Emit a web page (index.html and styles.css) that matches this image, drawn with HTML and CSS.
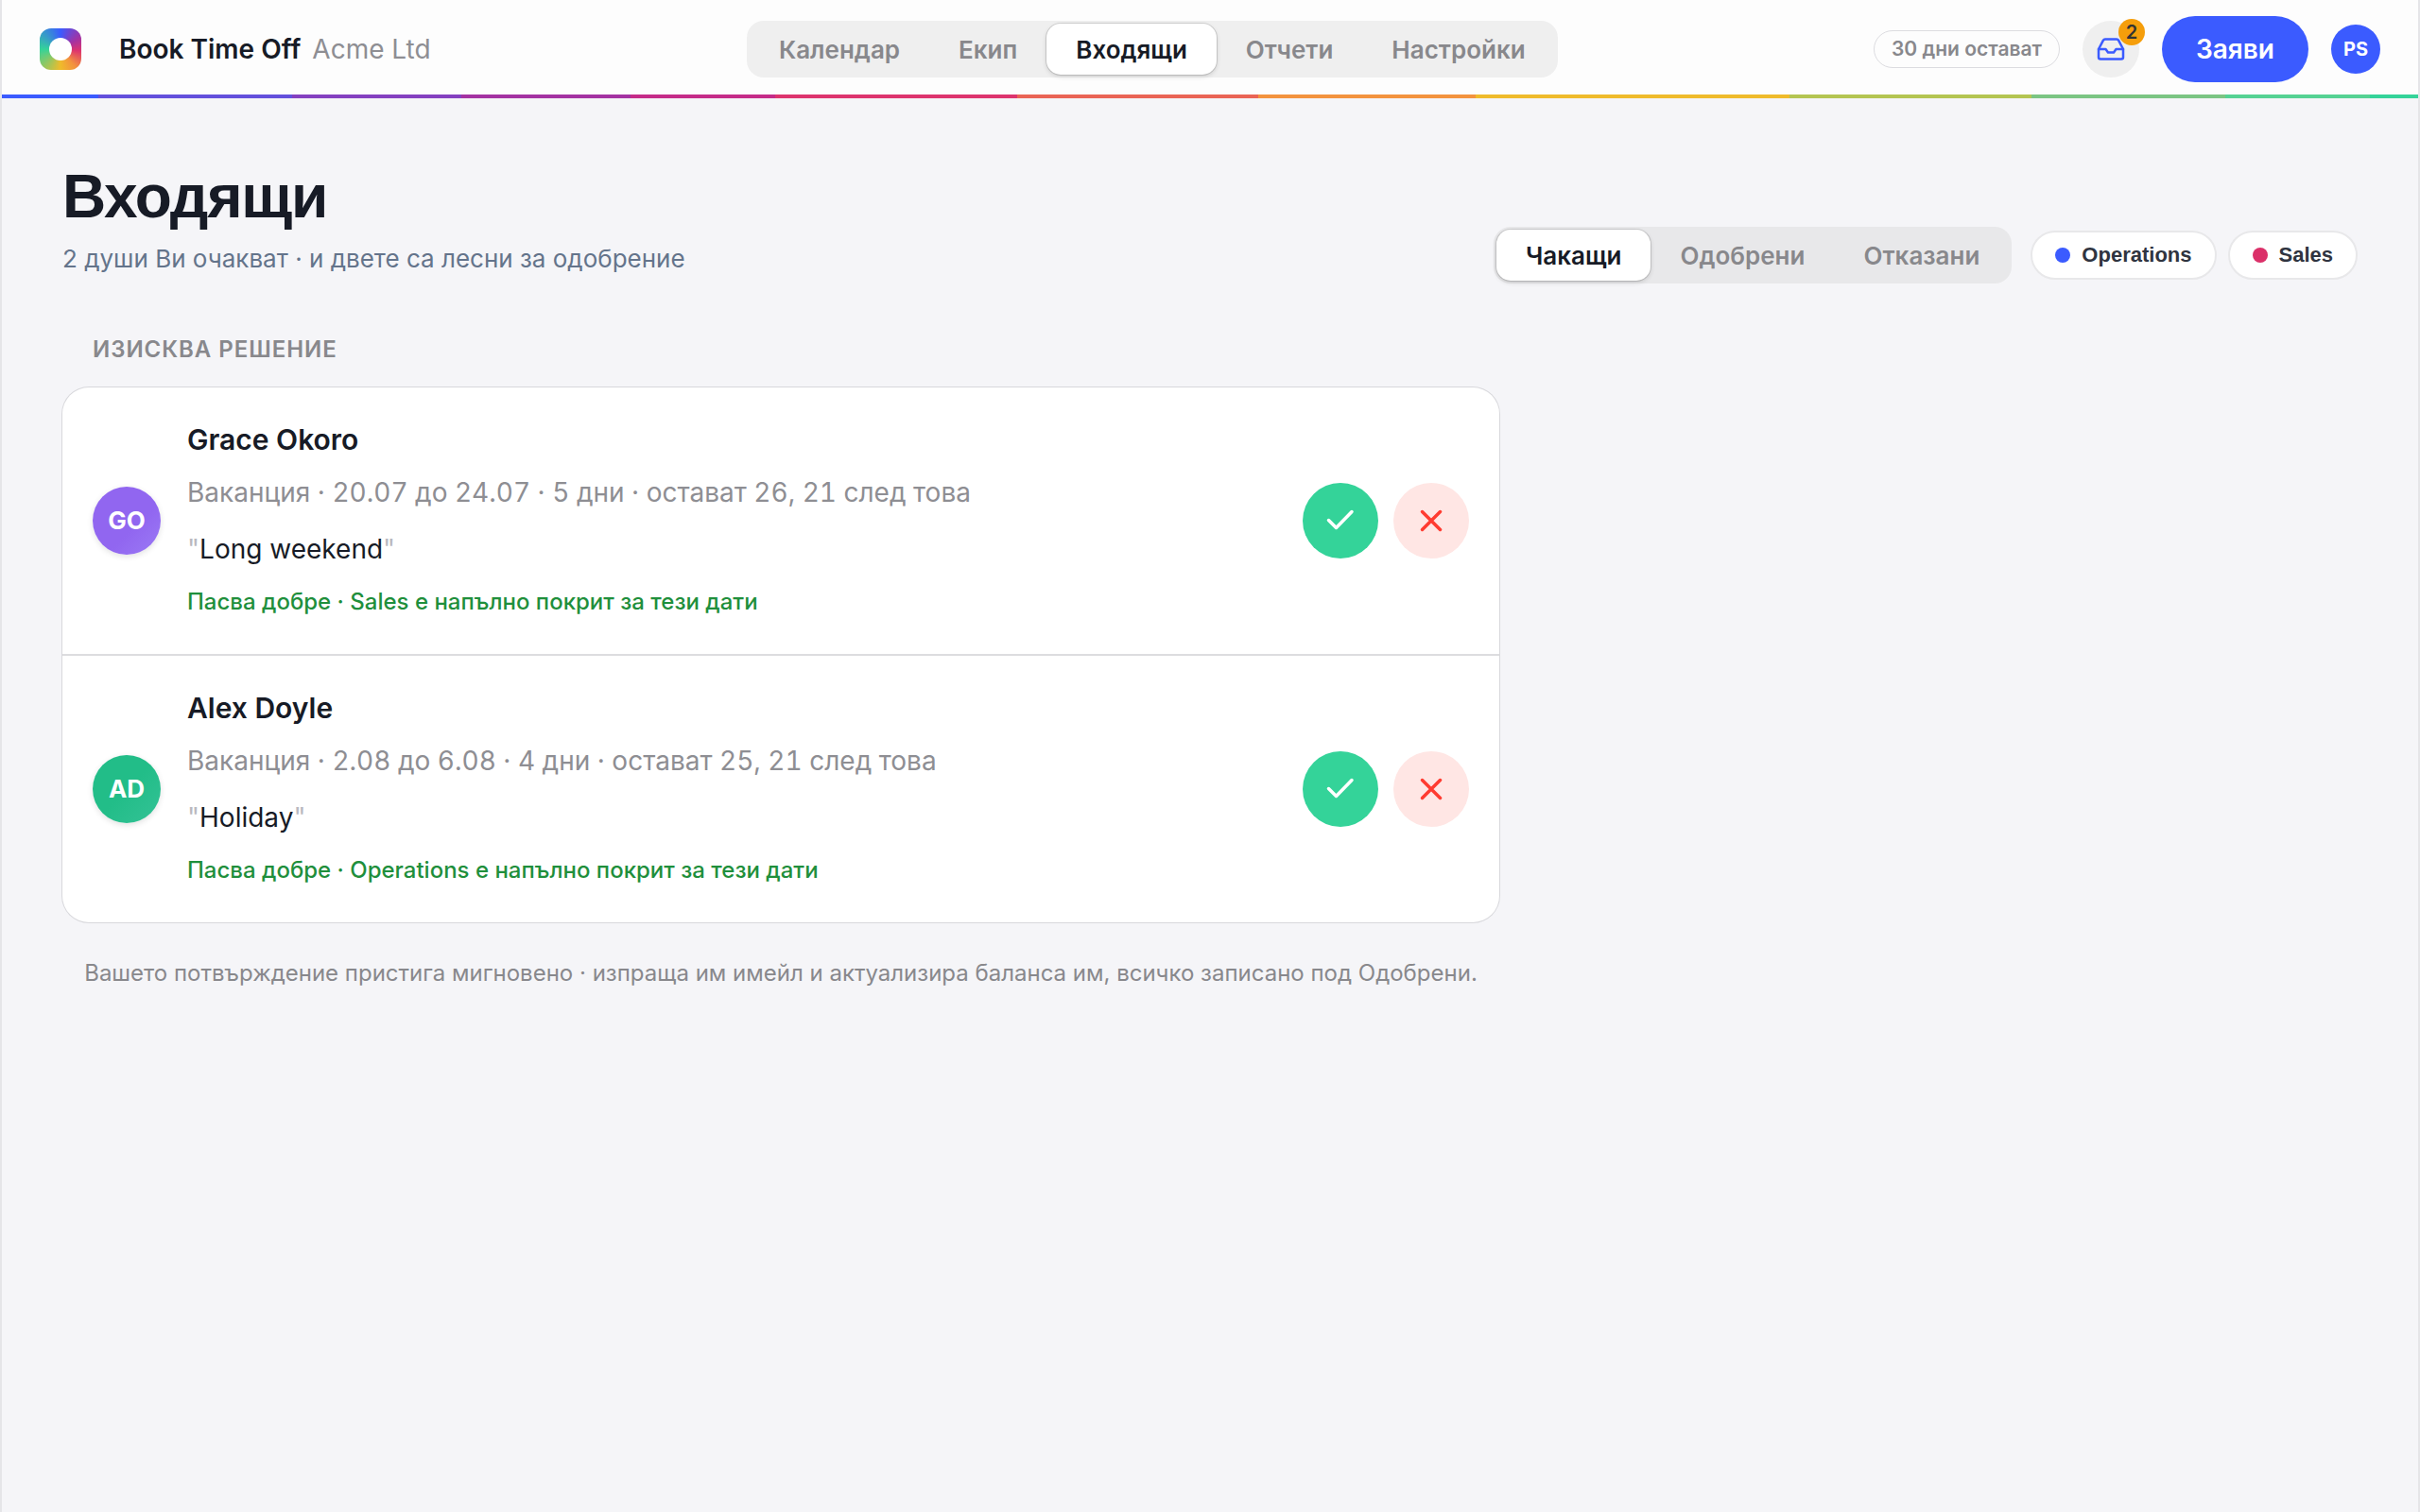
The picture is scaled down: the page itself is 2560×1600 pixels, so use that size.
FILE: index.html
```html
<!DOCTYPE html>
<html lang="bg">
<head>
    <meta charset="UTF-8">
    <meta name="viewport" content="width=device-width, initial-scale=1.0">
    <title>Входящи - Book Time Off</title>
    <link rel="stylesheet" href="styles.css">
</head>
<body>
    <header class="topbar">
        <div class="brand">
            <span class="logo"></span>
            <span class="brand-name">Book Time Off</span>
            <span class="brand-org">Acme Ltd</span>
        </div>
        <nav class="segmented nav">
            <a href="#">Календар</a>
            <a href="#">Екип</a>
            <a href="#" class="active">Входящи</a>
            <a href="#">Отчети</a>
            <a href="#">Настройки</a>
        </nav>
        <div class="actions">
            <span class="balance">30 дни остават</span>
            <button type="button" class="inbox-btn" aria-label="Входящи">
                <svg width="30" height="26" viewBox="-1 -1 30 26">
                    <path d="M1 12h7.500l2.500 3.500h6l2.500-3.500H27"/>
                    <path d="M8 1.500h12a2.500 2.500 0 0 1 2.200 1.300L27 12v8.500a2 2 0 0 1-2 2H3a2 2 0 0 1-2-2V12l4.800-9.200A2.500 2.500 0 0 1 8 1.500z"/>
                </svg>
                <span class="badge">2</span>
            </button>
            <button type="button" class="request-btn">Заяви</button>
            <button type="button" class="user-btn">PS</button>
        </div>
    </header>

    <main class="page">
        <div class="page-head">
            <div>
                <h1>Входящи</h1>
                <p class="subtitle">2 души Ви очакват · и двете са лесни за одобрение</p>
            </div>
            <div class="filters">
                <div class="segmented tabs">
                    <button type="button" class="active">Чакащи</button>
                    <button type="button">Одобрени</button>
                    <button type="button">Отказани</button>
                </div>
                <div class="chips">
                    <button type="button" class="chip"><span class="dot dot-blue"></span>Operations</button>
                    <button type="button" class="chip"><span class="dot dot-pink"></span>Sales</button>
                </div>
            </div>
        </div>

        <section class="inbox">
            <h2>Изисква решение</h2>
            <ul class="card">
                <li class="request">
                    <span class="avatar avatar-purple">GO</span>
                    <div class="info">
                        <h3>Grace Okoro</h3>
                        <p class="details">Ваканция · 20.07 до 24.07 · 5 дни · остават 26, 21 след това</p>
                        <p class="note"><span>"</span>Long weekend<span>"</span></p>
                        <p class="cover">Пасва добре · Sales е напълно покрит за тези дати</p>
                    </div>
                    <div class="decide">
                        <button type="button" class="round approve" aria-label="Одобри">
                            <svg width="36" height="36" viewBox="0 0 36 36"><path d="M5.500 17.500l8 8L30 8.500"/></svg>
                        </button>
                        <button type="button" class="round decline" aria-label="Откажи">
                            <svg width="36" height="36" viewBox="0 0 36 36"><path d="M8.500 8.500l19 19M27.500 8.500l-19 19"/></svg>
                        </button>
                    </div>
                </li>
                <li class="request">
                    <span class="avatar avatar-green">AD</span>
                    <div class="info">
                        <h3>Alex Doyle</h3>
                        <p class="details">Ваканция · 2.08 до 6.08 · 4 дни · остават 25, 21 след това</p>
                        <p class="note"><span>"</span>Holiday<span>"</span></p>
                        <p class="cover">Пасва добре · Operations е напълно покрит за тези дати</p>
                    </div>
                    <div class="decide">
                        <button type="button" class="round approve" aria-label="Одобри">
                            <svg width="36" height="36" viewBox="0 0 36 36"><path d="M5.500 17.500l8 8L30 8.500"/></svg>
                        </button>
                        <button type="button" class="round decline" aria-label="Откажи">
                            <svg width="36" height="36" viewBox="0 0 36 36"><path d="M8.500 8.500l19 19M27.500 8.500l-19 19"/></svg>
                        </button>
                    </div>
                </li>
            </ul>
            <p class="hint">Вашето потвърждение пристига мигновено · изпраща им имейл и актуализира баланса им, всичко записано под Одобрени.</p>
        </section>
    </main>
</body>
</html>
```
FILE: styles.css
```css
* {
    box-sizing: border-box;
}

body {
    margin: 0;
    min-height: 100vh;
    border: solid #e5e5e8;
    border-width: 0 2px;
    background-color: #f5f5f8;
    color: #171b26;
    font-family: Inter, "Liberation Sans", sans-serif;
    font-optical-sizing: none;
}

h1, h2, h3, p, ul {
    margin: 0;
    padding: 0;
}

button {
    padding: 0;
    border: none;
    background: none;
    color: inherit;
    font-family: inherit;
    cursor: pointer;
}

svg {
    fill: none;
    stroke: currentColor;
    stroke-linecap: round;
    stroke-linejoin: round;
}

/* Top bar */
.topbar {
    position: relative;
    display: flex;
    align-items: center;
    justify-content: space-between;
    height: 104px;
    padding: 0 40px;
    background-color: #fdfdfd;
}

.topbar::after {
    content: "";
    position: absolute;
    left: 0;
    right: 0;
    bottom: 0;
    height: 4px;
    background: linear-gradient(90deg,
        #3b5bff 4%, #6350dc 4% 12%, #8440c0 12% 19%, #a432a2 19% 26%,
        #c52b88 26% 32%, #dd346e 32% 42%, #ea6455 42% 52%, #f3933e 52% 61%,
        #efbb2b 61% 74%, #b4c551 74% 84%, #7bc583 84% 92%, #55d293 92% 98%,
        #34d399 98%);
}

.brand {
    display: flex;
    align-items: center;
    font-size: 28px;
    line-height: 36px;
}

.logo {
    display: flex;
    align-items: center;
    justify-content: center;
    width: 44px;
    height: 44px;
    margin-right: 40px;
    border-radius: 12px;
    background: conic-gradient(#3b5bff, #a432a2 60deg, #dd346e 95deg, #f3933e 140deg, #efbb2b 180deg, #34d399 270deg, #3b5bff);
}

.logo::after {
    content: "";
    width: 24px;
    height: 24px;
    border-radius: 50%;
    background-color: #fff;
}

.brand-name {
    margin-right: 12px;
    font-weight: 600;
}

.brand-org {
    color: #8e8e93;
}

/* Segmented controls */
.segmented {
    display: flex;
    height: 60px;
    padding: 3px;
    border-radius: 18px;
    background-color: #e8e8ea;
}

.nav {
    background-color: #efefef;
}

.segmented a,
.segmented button {
    display: flex;
    align-items: center;
    padding: 0 31px;
    border-radius: 15px;
    color: #88888c;
    font-size: 26px;
    font-weight: 600;
    text-decoration: none;
}

.segmented .active {
    background-color: #fff;
    color: #171b26;
    box-shadow: 0 0 0 1px rgba(0, 0, 0, 0.12), 0 2px 5px rgba(0, 0, 0, 0.15);
}

.actions {
    display: flex;
    align-items: center;
    justify-content: flex-end;
    gap: 24px;
}

.balance {
    padding: 0 18px;
    border: 1px solid #dcdce0;
    border-radius: 20px;
    color: #88888c;
    font-size: 21px;
    font-weight: 600;
    line-height: 38px;
}

.inbox-btn {
    position: relative;
    display: flex;
    align-items: center;
    justify-content: center;
    width: 60px;
    height: 60px;
    border-radius: 50%;
    background-color: #efefef;
    color: #3b5bff;
    stroke-width: 2.5;
}

.badge {
    position: absolute;
    top: -2px;
    right: -6px;
    width: 28px;
    border-radius: 14px;
    background-color: #f59e0b;
    color: #333;
    font-size: 20px;
    font-weight: 600;
    line-height: 28px;
}

.request-btn {
    height: 70px;
    padding: 0 36px;
    border-radius: 35px;
    background-color: #3b5bff;
    color: #fff;
    font-size: 28px;
    font-weight: 600;
}

.user-btn {
    width: 52px;
    height: 52px;
    border-radius: 50%;
    background-color: #3b5bff;
    color: #fff;
    font-size: 20px;
    font-weight: 700;
}

/* Page */
.page {
    padding: 64px;
}

.page-head {
    display: flex;
    align-items: flex-end;
    justify-content: space-between;
}

h1 {
    font-family: "Liberation Sans", Arial, sans-serif;
    font-size: 64px;
    line-height: 80px;
    letter-spacing: -0.02em;
}

.subtitle {
    margin-top: 4px;
    padding-bottom: 4px;
    color: #64748b;
    font-size: 26px;
    line-height: 44px;
}

.filters {
    display: flex;
    align-items: center;
    gap: 20px;
}

.chips {
    display: flex;
    gap: 12px;
}

.chip {
    display: flex;
    align-items: center;
    gap: 12px;
    height: 52px;
    padding: 0 24px;
    border: 2px solid #e8e8ea;
    border-radius: 26px;
    background-color: #fff;
    color: #2f3440;
    font-family: "Liberation Sans", Arial, sans-serif;
    font-size: 22px;
    font-weight: 700;
}

.dot {
    width: 16px;
    height: 16px;
    border-radius: 50%;
}

.dot-blue {
    background-color: #3b5bff;
}

.dot-pink {
    background-color: #db3069;
}

/* Requests */
.inbox {
    max-width: 1520px;
    margin-top: 52px;
}

h2 {
    padding: 0 32px;
    color: #88888c;
    font-size: 24px;
    font-weight: 600;
    line-height: 36px;
    letter-spacing: 0.04em;
    text-transform: uppercase;
}

.card {
    margin-top: 22px;
    border-radius: 28px;
    background-color: #fff;
    box-shadow: 0 0 0 1px #d8d8dc;
    list-style: none;
}

.request {
    display: flex;
    align-items: center;
    gap: 28px;
    padding: 33px 32px;
}

.request + .request {
    border-top: 2px solid #dcdcdf;
}

.avatar {
    width: 72px;
    border-radius: 50%;
    color: #fff;
    font-size: 26px;
    font-weight: 700;
    line-height: 72px;
    text-align: center;
    box-shadow: 0 2px 6px rgba(0, 0, 0, 0.12);
}

.avatar-purple {
    background: linear-gradient(135deg, #9166f0 60%, #9b7af5);
}

.avatar-green {
    background: linear-gradient(135deg, #22bd88 50%, #34c296);
}

.info {
    flex: 1;
}

h3 {
    font-size: 30px;
    font-weight: 600;
    line-height: 44px;
}

.details {
    margin-top: 12px;
    color: #8e8e93;
    font-size: 28px;
    font-variant-numeric: tabular-nums;
    line-height: 44px;
}

.note {
    margin-top: 16px;
    font-size: 28px;
    line-height: 44px;
}

.note span {
    color: #b9b9bf;
}

.cover {
    margin-top: 12px;
    color: #1f8f3c;
    font-size: 24px;
    font-weight: 500;
    line-height: 44px;
}

.decide {
    display: flex;
    gap: 16px;
}

.round {
    display: flex;
    align-items: center;
    justify-content: center;
    width: 80px;
    height: 80px;
    border-radius: 50%;
    stroke-width: 3.5;
}

.approve {
    background-color: #34d399;
    color: #fff;
}

.decline {
    background-color: #ffe6e4;
    color: #ff3b30;
}

.hint {
    margin-top: 34px;
    color: #88888c;
    font-size: 24px;
    line-height: 40px;
    text-align: center;
}
```
